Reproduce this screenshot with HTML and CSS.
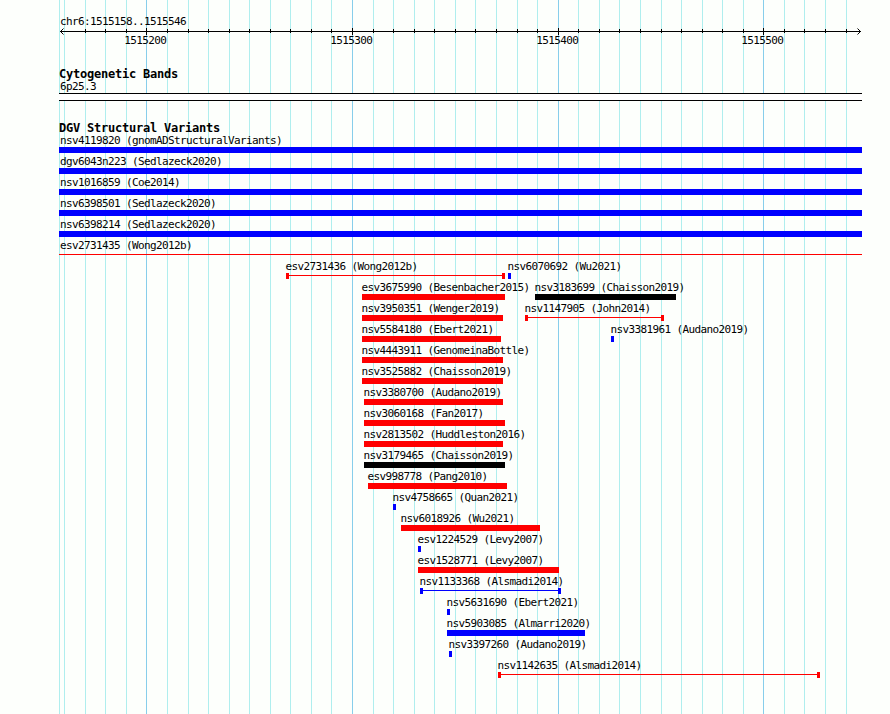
FILE: index.html
```
<!DOCTYPE html>
<html>

<head>
    <title>chr6:1515158..1515546</title>
    <meta charset="utf-8">
    <link rel="stylesheet" href="styles.css">
</head>

<body>
    <div class="browser">
        <svg id="grid" class="grid" width="890" height="714" shape-rendering="crispEdges"></svg>

        <div class="tracks">
            <div class="region">chr6:1515158..1515546</div>
            <svg id="ruler" class="ruler" width="803" height="22"></svg>

            <div class="track cytobands">
                <h2>Cytogenetic Bands</h2>
                <div class="label">6p25.3</div>
                <div class="band"></div>
            </div>

            <div class="track variants">
                <h2>DGV Structural Variants</h2>
                <div id="variants"></div>
            </div>
        </div>
    </div>
    <script src="script.js"></script>
</body>
</html>
```
FILE: styles.css
```
body {
    margin: 0;
    background-color: #fdfffc;
    color: #000;
    font-family: "DejaVu Sans Mono", monospace;
    font-size: 11px;
    line-height: 12px;
    letter-spacing: -0.62px;
}

.browser {
    display: grid;
    width: 890px;
    height: 714px;
    overflow: hidden;
}

/* grid lines run behind the tracks */
.grid,
.tracks {
    grid-area: 1 / 1;
}

.grid {
    display: block;
}

.tracks {
    width: 803px;
    padding: 16px 0 0 59px;
}

.minor {
    fill: #afeeee;
}

.major {
    fill: #87ceeb;
}

.region {
    height: 12px;
    padding-left: 1px;
}

.ruler {
    display: block;
    overflow: visible;
}

.ruler path {
    fill: none;
    stroke: #000;
}

h2 {
    height: 13px;
    margin: 0;
    font-size: 12px;
    line-height: 12px;
    letter-spacing: -0.22px;
}

.cytobands {
    margin-top: 18px;
}

.label {
    padding-left: 1px;
    white-space: pre;
}

.band {
    height: 6px;
    background-color: #fff;
    border-top: 1px solid #000;
    border-bottom: 1px solid #000;
}

.variants {
    margin-top: 21px;
}

.row {
    display: grid;
    height: 21px;
}

.feature {
    grid-area: 1 / 1;
}

.feature .label {
    width: 0;
    padding-left: 0;
    margin-left: -0.6px;
}

.feature.full .label {
    margin-left: 1px;
}

.bar {
    height: 6px;
    background-color: currentColor;
}

.red {
    color: #f00;
}

.blue {
    color: #00f;
}

.black {
    color: #000;
}

/* thin line with a block on each end */
.span {
    display: flex;
    justify-content: space-between;
    background: linear-gradient(currentColor, currentColor) 0 2px / 100% 1px no-repeat;
}

.span::before,
.span::after {
    content: "";
    width: 3px;
    background-color: currentColor;
}

.full .span::before,
.full .span::after {
    display: none;
}
```
FILE: script.js
```
const LEFT = 59;
const RIGHT = 862;
const ticks = [
    85, 105, 126, 146, 167, 188, 208, 229, 249, 270, 290, 311, 331, 352,
    373, 393, 414, 434, 455, 475, 496, 517, 537, 558, 578, 599, 619, 640,
    661, 681, 702, 722, 743, 763, 784, 804, 825, 846
];
const majors = { 146: '1515200', 352: '1515300', 558: '1515400', 763: '1515500' };

// label, start, end, color, type
const rows = [
    [['nsv4119820 (gnomADStructuralVariants)', LEFT, RIGHT, 'blue', 'box']],
    [['dgv6043n223 (Sedlazeck2020)', LEFT, RIGHT, 'blue', 'box']],
    [['nsv1016859 (Coe2014)', LEFT, RIGHT, 'blue', 'box']],
    [['nsv6398501 (Sedlazeck2020)', LEFT, RIGHT, 'blue', 'box']],
    [['nsv6398214 (Sedlazeck2020)', LEFT, RIGHT, 'blue', 'box']],
    [['esv2731435 (Wong2012b)', LEFT, RIGHT, 'red', 'span']],
    [['esv2731436 (Wong2012b)', 286, 505, 'red', 'span'], ['nsv6070692 (Wu2021)', 508, 511, 'blue', 'box']],
    [['esv3675990 (Besenbacher2015)', 362, 505, 'red', 'box'], ['nsv3183699 (Chaisson2019)', 535, 676, 'black', 'box']],
    [['nsv3950351 (Wenger2019)', 362, 503, 'red', 'box'], ['nsv1147905 (John2014)', 525, 664, 'red', 'span']],
    [['nsv5584180 (Ebert2021)', 362, 501, 'red', 'box'], ['nsv3381961 (Audano2019)', 611, 614, 'blue', 'box']],
    [['nsv4443911 (GenomeinaBottle)', 362, 503, 'red', 'box']],
    [['nsv3525882 (Chaisson2019)', 362, 503, 'red', 'box']],
    [['nsv3380700 (Audano2019)', 364, 503, 'red', 'box']],
    [['nsv3060168 (Fan2017)', 364, 505, 'red', 'box']],
    [['nsv2813502 (Huddleston2016)', 364, 503, 'red', 'box']],
    [['nsv3179465 (Chaisson2019)', 364, 505, 'black', 'box']],
    [['esv998778 (Pang2010)', 368, 507, 'red', 'box']],
    [['nsv4758665 (Quan2021)', 393, 396, 'blue', 'box']],
    [['nsv6018926 (Wu2021)', 401, 540, 'red', 'box']],
    [['esv1224529 (Levy2007)', 418, 421, 'blue', 'box']],
    [['esv1528771 (Levy2007)', 418, 559, 'red', 'box']],
    [['nsv1133368 (Alsmadi2014)', 420, 561, 'blue', 'span']],
    [['nsv5631690 (Ebert2021)', 447, 450, 'blue', 'box']],
    [['nsv5903085 (Almarri2020)', 447, 585, 'blue', 'box']],
    [['nsv3397260 (Audano2019)', 449, 452, 'blue', 'box']],
    [['nsv1142635 (Alsmadi2014)', 498, 820, 'red', 'span']]
];

// background grid
document.getElementById('grid').innerHTML = [59, 64].concat(ticks).map(x =>
    `<rect class="${majors[x] ? 'major' : 'minor'}" x="${x}" y="0" width="1" height="714"/>`
).join('');

// ruler: axis, arrow heads, ticks and their numbers
let d = 'M1 3.5H802 M4.5 0.5L1.5 3.5L4.5 6.5 M798.5 0.5L801.5 3.5L798.5 6.5';
let numbers = '';
for (const t of ticks) {
    const x = t - LEFT + 0.5;
    d += majors[t] ? ` M${x} 0V7` : ` M${x} 1V5`;
    if (majors[t]) {
        numbers += `<text x="${t - LEFT - 21.7}" y="16">${majors[t]}</text>`;
    }
}
document.getElementById('ruler').innerHTML = `<path d="${d}"/>${numbers}`;

document.getElementById('variants').innerHTML = rows.map(row =>
    '<div class="row">' + row.map(([label, start, end, color, type]) => `
        <div class="feature${start === LEFT ? ' full' : ''}" style="margin-left: ${start - LEFT}px; width: ${end - start}px">
            <div class="label">${label}</div>
            <div class="${type === 'span' ? 'bar span' : 'bar'} ${color}"></div>
        </div>`).join('') + '</div>'
).join('');
```
